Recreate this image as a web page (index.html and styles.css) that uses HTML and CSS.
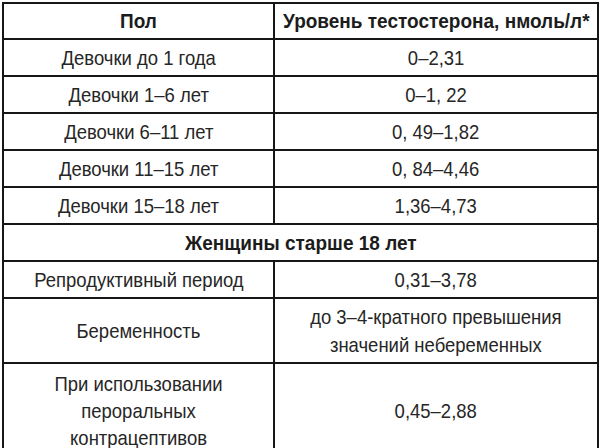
FILE: index.html
```html
<!DOCTYPE html>
<html lang="ru">
<head>
<meta charset="utf-8">
<link rel="stylesheet" href="styles.css">
</head>
<body>
<table class="t">
  <colgroup><col class="c1"><col class="c2"></colgroup>
  <tr class="h"><th><span class="tx">Пол</span></th><th><span class="tx">Уровень тестостерона, нмоль/л*</span></th></tr>
  <tr class="r"><td><span class="tx">Девочки до 1 года</span></td><td><span class="tx">0–2,31</span></td></tr>
  <tr class="r"><td><span class="tx">Девочки 1–6 лет</span></td><td><span class="tx">0–1, 22</span></td></tr>
  <tr class="r"><td><span class="tx">Девочки 6–11 лет</span></td><td><span class="tx">0, 49–1,82</span></td></tr>
  <tr class="r"><td><span class="tx">Девочки 11–15 лет</span></td><td><span class="tx">0, 84–4,46</span></td></tr>
  <tr class="r"><td><span class="tx">Девочки 15–18 лет</span></td><td><span class="tx">1,36–4,73</span></td></tr>
  <tr class="r sec"><th colspan="2"><span class="tx">Женщины старше 18 лет</span></th></tr>
  <tr class="r"><td><span class="tx">Репродуктивный период</span></td><td><span class="tx">0,31–3,78</span></td></tr>
  <tr class="r2"><td><span class="tx">Беременность</span></td><td><span class="tx ml">до 3–4-кратного превышения<br>значений небеременных</span></td></tr>
  <tr class="r3"><td><span class="tx ml3">При использовании<br>пероральных<br>контрацептивов</span></td><td><span class="tx">0,45–2,88</span></td></tr>
</table>
</body>
</html>
```
FILE: styles.css
```css
html, body { margin: 0; padding: 0; background: #fff; }
body { padding: 2px 0 0 2px; }
.t {
  border-collapse: collapse;
  font-family: "Liberation Sans", Arial, sans-serif;
  font-size: 21px;
  color: #262626;
  table-layout: fixed;
  width: 595px;
}
.c1 { width: 271px; }
.c2 { width: 324px; }
.t th, .t td {
  border: 2px solid #161616;
  text-align: center;
  vertical-align: middle;
  padding: 0;
  line-height: 22px;
  white-space: nowrap;
}
.t th { font-weight: bold; color: #1c1c1c; font-size: 20px; }
.tx {
  display: inline-block;
  transform: scaleX(0.88);
  transform-origin: center;
}
.t th .tx { transform: scaleX(0.95); }
.h { height: 36px; }
.r { height: 37px; }
.r2 { height: 65px; }
.r3 { height: 94px; }
.ml { line-height: 28px; }
.ml3 { line-height: 27px; }
.t tr.r3 td { border-bottom: none; }
```
